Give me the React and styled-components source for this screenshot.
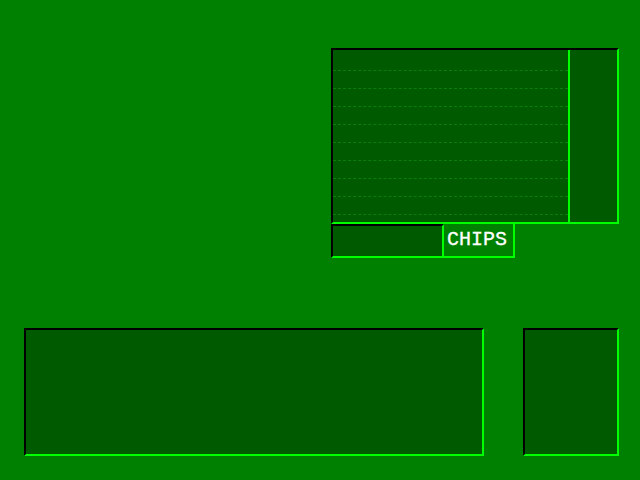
import React from "react";
import styled, { createGlobalStyle } from "styled-components";

const Global = createGlobalStyle`
  html, body { margin: 0; padding: 0; background: #008000; }
  body { width: 640px; height: 480px; overflow: hidden; font-family: "Liberation Mono", monospace; }
`;

const Page = styled.div`
  width: 640px;
  height: 480px;
  background: #008000;
  display: flex;
  flex-direction: column;
  box-sizing: border-box;
  padding-top: 48px;
`;

const TopArea = styled.div`
  display: flex;
  justify-content: flex-end;
  padding-right: 21px;
`;

const TopBlock = styled.div`
  width: 288px;
  display: flex;
  flex-direction: column;
`;

const Inset = styled.div`
  box-sizing: border-box;
  background: #005a00;
  border-top: 2px solid #000;
  border-left: 2px solid #000;
  border-bottom: 2px solid #00ff00;
  border-right: 2px solid #00ff00;
`;

const MainPanel = styled(Inset)`
  height: 176px;
  display: flex;
`;

const List = styled.div`
  width: 235px;
  padding-top: 3px;
  box-sizing: border-box;
  display: flex;
  flex-direction: column;
`;

const ListRow = styled.div`
  height: 17px;
  border-bottom: 1px dashed #0c7c0c;
`;

const Divider = styled.div`
  width: 2px;
  background: #00ff00;
`;

const SideColumn = styled.div`
  flex: 1;
`;

const InfoRow = styled.div`
  display: flex;
  height: 34px;
`;

const InfoBox = styled(Inset)`
  width: 113px;
`;

const ChipsBox = styled.div`
  box-sizing: border-box;
  width: 71px;
  border-right: 2px solid #00ff00;
  border-bottom: 2px solid #00ff00;
  color: #ffffff;
  font-family: "Liberation Mono", "Courier New", monospace;
  font-size: 20px;
  line-height: 32px;
  padding-left: 3px;
  -webkit-text-stroke: 0.3px #ffffff;
`;

const BottomArea = styled.div`
  margin-top: 70px;
  display: flex;
  gap: 39px;
  padding-left: 24px;
  padding-right: 21px;
`;

const BigPanel = styled(Inset)`
  width: 460px;
  height: 128px;
`;

const SmallPanel = styled(Inset)`
  flex: 1;
  height: 128px;
`;

export default function App() {
  const rows = Array.from({ length: 9 });
  return (
    <>
      <Global />
      <Page>
        <TopArea>
          <TopBlock>
            <MainPanel>
              <List>
                {rows.map((_, i) => (
                  <ListRow key={i} />
                ))}
              </List>
              <Divider />
              <SideColumn />
            </MainPanel>
            <InfoRow>
              <InfoBox />
              <ChipsBox>CHIPS</ChipsBox>
            </InfoRow>
          </TopBlock>
        </TopArea>
        <BottomArea>
          <BigPanel />
          <SmallPanel />
        </BottomArea>
      </Page>
    </>
  );
}
